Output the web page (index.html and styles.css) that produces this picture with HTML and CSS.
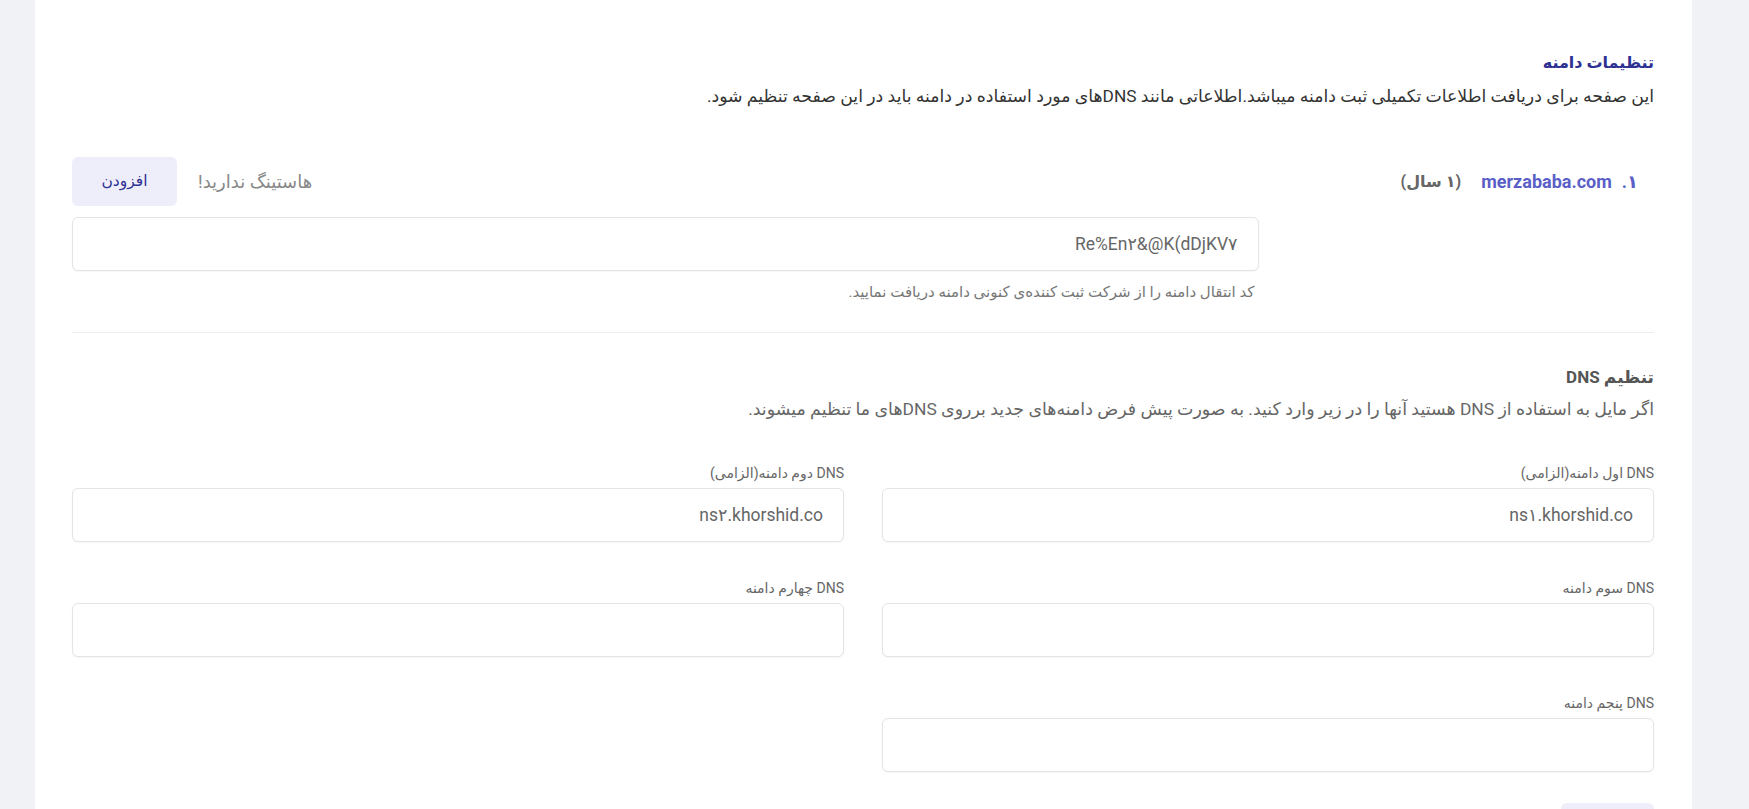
FILE: index.html
```html
<!DOCTYPE html>
<html lang="fa" dir="rtl">

<head>
    <meta charset="UTF-8">
    <meta name="viewport" content="width=device-width, initial-scale=1.0">
    <title>تنظیمات دامنه</title>
    <link rel="stylesheet" href="styles.css">
</head>

<body>
    <div id="page">
        <div id="card">
            <h3 class="title">تنظیمات دامنه</h3>
            <p class="desc">این صفحه برای دریافت اطلاعات تکمیلی ثبت دامنه میباشد.اطلاعاتی مانند DNSهای مورد استفاده در دامنه باید در این صفحه تنظیم شود.</p>

            <div class="domain-row">
                <div class="domain-name">
                    <span class="num">۱.</span>
                    <span class="name">merzababa.com</span>
                    <span class="period">(۱ سال)</span>
                </div>
                <div class="hosting">
                    <span>هاستینگ ندارید!</span>
                    <a href="#" class="btn-light">افزودن</a>
                </div>
            </div>

            <div class="transfer">
                <input type="text" class="field" value="Re%En۲&@K(dDjKV۷">
                <p class="help">کد انتقال دامنه را از شرکت ثبت کننده‌ی کنونی دامنه دریافت نمایید.</p>
            </div>

            <hr>

            <h4 class="sub-title">تنظیم DNS</h4>
            <p class="sub-desc">اگر مایل به استفاده از DNS هستید آنها را در زیر وارد کنید. به صورت پیش فرض دامنه‌های جدید برروی DNSهای ما تنظیم میشوند.</p>

            <div class="dns-grid">
                <div class="dns-item">
                    <label>DNS اول دامنه(الزامی)</label>
                    <input type="text" class="field" value="ns۱.khorshid.co">
                </div>
                <div class="dns-item">
                    <label>DNS دوم دامنه(الزامی)</label>
                    <input type="text" class="field" value="ns۲.khorshid.co">
                </div>
                <div class="dns-item">
                    <label>DNS سوم دامنه</label>
                    <input type="text" class="field">
                </div>
                <div class="dns-item">
                    <label>DNS چهارم دامنه</label>
                    <input type="text" class="field">
                </div>
                <div class="dns-item">
                    <label>DNS پنجم دامنه</label>
                    <input type="text" class="field">
                </div>
            </div>

            <div class="actions">
                <a href="#" class="btn-light btn-save">ذخیره</a>
            </div>
        </div>
    </div>
</body>

</html>
```

FILE: styles.css
```css
*{
    margin: 0;
    padding: 0;
    box-sizing: border-box;
}
body{
    background: #f1f2f5;
    font-family: Roboto, "DejaVu Sans", sans-serif;
    color: #333;
}
#page{
    padding: 0 57px 0 35px;
}
#card{
    background: #fff;
    padding: 50px 38px 60px 37px;
}
.title{
    font-size: 16px;
    line-height: 26px;
    color: #2e3192;
    font-weight: bold;
}
.desc{
    font-size: 17.3px;
    line-height: 26px;
    color: #333;
    margin-top: 7px;
}
.domain-row{
    display: flex;
    justify-content: space-between;
    align-items: center;
    margin-top: 48px;
}
.domain-name{
    display: flex;
    align-items: center;
    padding-right: 16px;
    font-weight: bold;
}
.domain-name .num,
.domain-name .name{
    color: #5a5fc7;
    font-size: 18px;
}
.domain-name .num{
    margin-left: 10px;
}
.domain-name .period{
    color: #666;
    font-size: 16px;
    margin-right: 20px;
}
.hosting{
    display: flex;
    align-items: center;
    gap: 21px;
    color: #888;
    font-size: 18px;
}
.btn-light{
    display: inline-block;
    width: 105px;
    height: 49px;
    line-height: 49px;
    text-align: center;
    background: #eeeefa;
    color: #2e3192;
    border-radius: 6px;
    text-decoration: none;
    font-size: 15.5px;
}
.transfer{
    width: 75%;
    margin-right: auto;
    margin-top: 11px;
}
.field{
    display: block;
    width: 100%;
    height: 54px;
    border: 1px solid #e4e4e4;
    border-radius: 6px;
    padding: 0 20px;
    font-family: inherit;
    font-size: 17.5px;
    color: #666;
    background: #fff;
    outline: none;
    box-shadow: 0 1px 2px rgba(0,0,0,0.04);
}
.help{
    font-size: 15px;
    line-height: 20px;
    color: #777;
    margin-top: 11px;
    padding-right: 4px;
}
hr{
    border: 0;
    border-top: 1px solid #eee;
    margin: 30px 0 31px;
}
.sub-title{
    font-size: 17px;
    line-height: 26px;
    color: #555;
    font-weight: bold;
}
.sub-desc{
    font-size: 17.4px;
    line-height: 26px;
    color: #666;
    margin-top: 6px;
}
.dns-grid{
    display: grid;
    grid-template-columns: 1fr 1fr;
    column-gap: 38px;
    row-gap: 36px;
    margin-top: 41px;
}
.dns-item label{
    display: block;
    font-size: 14px;
    line-height: 20px;
    color: #666;
    margin-bottom: 5px;
}
.actions{
    margin-top: 31px;
}
.btn-save{
    width: 93px;
}
```
